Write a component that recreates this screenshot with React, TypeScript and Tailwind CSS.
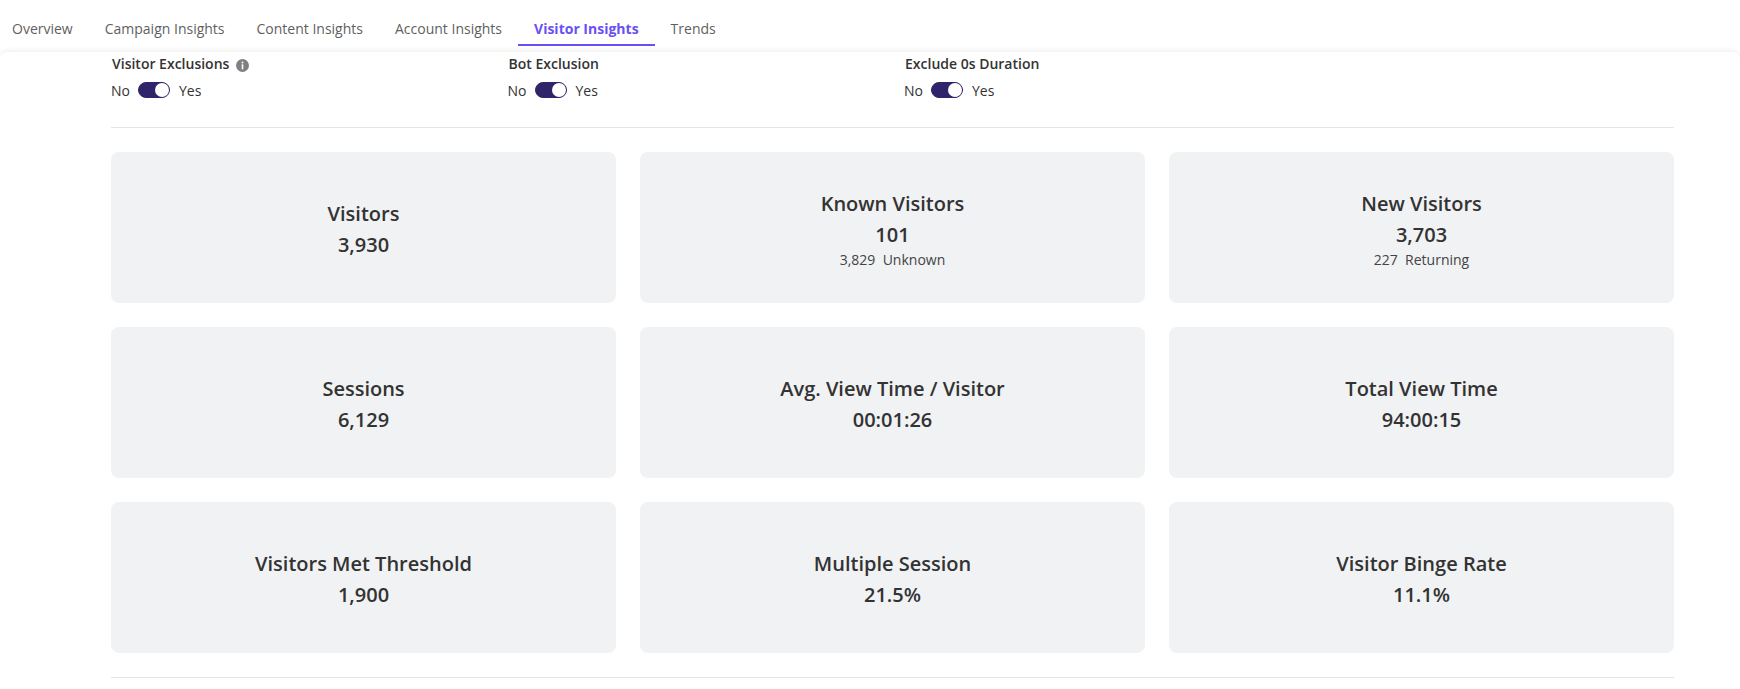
const tabs = ['Overview', 'Campaign Insights', 'Content Insights', 'Account Insights', 'Visitor Insights', 'Trends'];

const stats = [
  { title: 'Visitors', value: '3,930' },
  { title: 'Known Visitors', value: '101', sub: '3,829\u00a0\u00a0Unknown' },
  { title: 'New Visitors', value: '3,703', sub: '227\u00a0\u00a0Returning' },
  { title: 'Sessions', value: '6,129' },
  { title: 'Avg. View Time / Visitor', value: '00:01:26' },
  { title: 'Total View Time', value: '94:00:15' },
  { title: 'Visitors Met Threshold', value: '1,900' },
  { title: 'Multiple Session', value: '21.5%' },
  { title: 'Visitor Binge Rate', value: '11.1%' },
];

function Toggle({ label, info }: { label: string; info?: boolean }) {
  return (
    <div className="w-[396.5px] text-[14px] font-semibold text-[#333333]">
      <div className="flex items-center gap-[7px] h-[20px] leading-[20px]">
        <span className="pl-px">{label}</span>
        {info && (
          <svg width="13" height="13" viewBox="0 0 13 13" className="mt-[2px]">
            <circle cx="6.5" cy="6.5" r="6.5" fill="#808080" />
            <rect x="5.6" y="2.6" width="1.8" height="1.8" rx="0.9" fill="#fff" />
            <rect x="5.7" y="5.3" width="1.6" height="5" fill="#fff" />
          </svg>
        )}
      </div>
      <div className="flex items-center gap-[8.5px] h-[20px] mt-[6px]">
        <span className="font-medium">No</span>
        <span className="w-[32px] h-[16px] rounded-full bg-[#2f2469] border border-[#2f2469] flex items-center justify-end">
          <span className="w-[14px] h-[14px] rounded-full bg-white" />
        </span>
        <span className="font-medium">Yes</span>
      </div>
    </div>
  );
}

export default function App() {
  return (
    <div className="w-[1740px] h-[689px] bg-white overflow-hidden font-['Open_Sans',sans-serif]">
      <div className="h-[52px]">
        <div className="h-[46px] flex items-end">
          {tabs.map((t) => (
            <div
              key={t}
              className={
                t === 'Visitor Insights'
                  ? 'h-[27px] px-[16px] text-[14px] leading-[20px] font-bold text-[#6a4ff5] border-b-[2px] border-[#6a4ff5]'
                  : 'h-[27px] px-[16px] text-[14px] leading-[20px] text-[#5f5f5f] first:pl-[12px]'
              }
            >
              {t}
            </div>
          ))}
        </div>
      </div>
      <div className="h-[637px] bg-white rounded-t-[8px] shadow-[0_-2px_5px_rgba(0,0,0,0.06)] px-[111px]">
        <div className="w-[1563px]">
          <div className="flex pt-[2px] h-[76px] border-b border-[#e4e4e4]">
            <Toggle label="Visitor Exclusions" info />
            <Toggle label="Bot Exclusion" />
            <Toggle label="Exclude 0s Duration" />
          </div>
          <div className="grid grid-cols-3 gap-[24px] py-[24px] border-b border-[#e4e4e4]">
            {stats.map((s) => (
              <div key={s.title} className="h-[151px] pt-[4px] rounded-[8px] bg-[#f1f2f4] flex flex-col items-center justify-center text-[#333333]">
                <div className="text-[20px] leading-[30px] font-semibold">{s.title}</div>
                <div className="text-[20px] leading-[31px] font-semibold">{s.value}</div>
                {s.sub && <div className="text-[14px] leading-[19px] mb-[2px] text-[#444444]">{s.sub}</div>}
              </div>
            ))}
          </div>
        </div>
      </div>
    </div>
  );
}
